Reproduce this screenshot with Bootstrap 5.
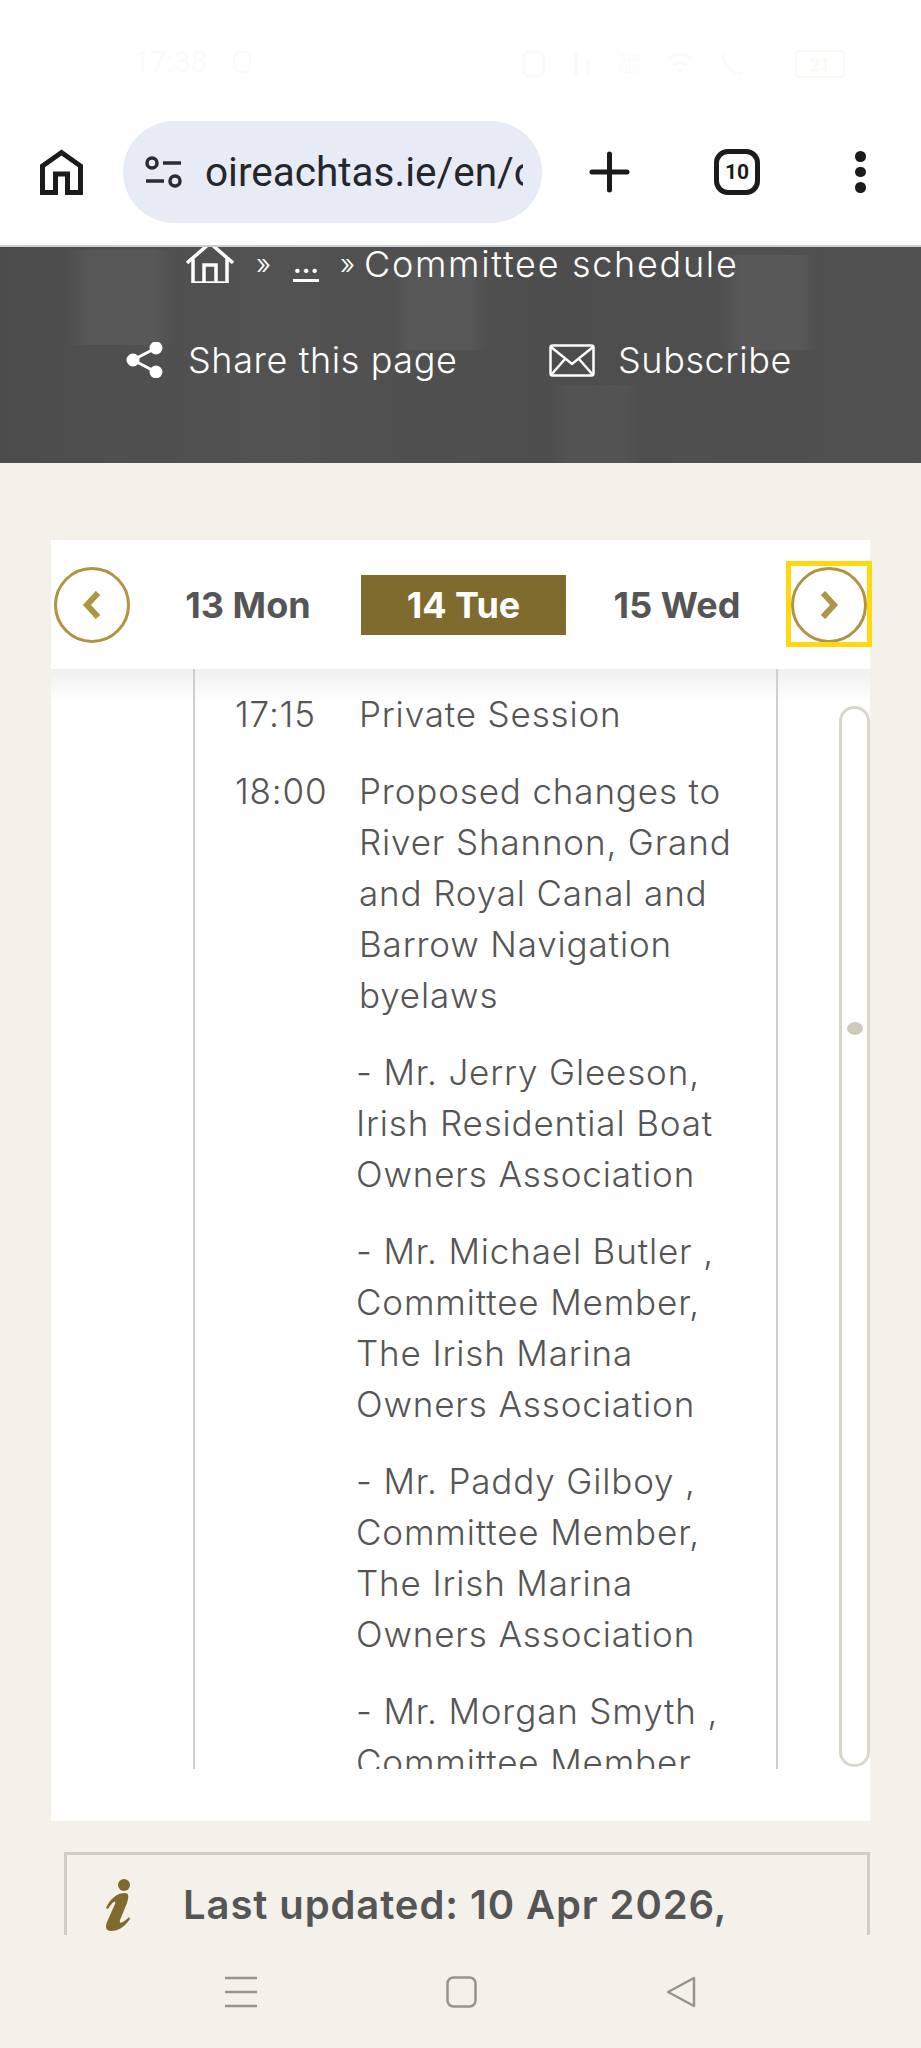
<!DOCTYPE html>
<html lang="en">
<head>
    <meta charset="utf-8">
    <title>Committee schedule</title>
    <link rel="stylesheet" href="https://cdn.jsdelivr.net/npm/bootstrap@5.3.0/dist/css/bootstrap.min.css">
    <style>
        html, body { height: 2048px; overflow: hidden; }
        body { background-color: #f4f1ea; font-family: Inter, "Open Sans", sans-serif; color: #555; }

        .status-strip { height: 121px; padding: 50px 76px 0 133px; color: #fafafa; font-family: Roboto, sans-serif; }
        .status-time { font-size: 30px; line-height: 24px; }
        .status-net { font-size: 10px; line-height: 11px; text-align: center; }

        .browser-bar { height: 126px; padding-bottom: 22px; border-bottom: 2px solid #c9d0d6; background: #fff; }
        .home-slot { width: 123px; padding-left: 40px; }
        .url-pill { width: 419px; height: 102px; border-radius: 51px; background: #e7ebf5; padding-left: 22px; }
        .url-text { width: 318px; margin-left: 22px; font-family: Roboto, sans-serif; font-size: 40.500px; color: #24262b; white-space: nowrap; overflow: hidden; }
        .bar-actions { padding-left: 47px; }
        .tab-count { width: 46px; height: 46px; margin-left: 84px; border: 5px solid #1b1b1d; border-radius: 14px; font: 700 21px/36px Roboto, sans-serif; text-align: center; color: #1b1b1d; }
        .dot-stack { margin-left: 95px; gap: 5px; }
        .dot-stack span { width: 10.500px; height: 10.500px; border-radius: 50%; background: #1b1b1d; }

        .hero-band {
            height: 216px; color: #fff; overflow: hidden;
            background-color: #4f4f4f;
            background-image:
                linear-gradient(90deg, transparent, rgba(255,255,255,.05) 18%, rgba(255,255,255,.05) 82%, transparent),
                linear-gradient(90deg, transparent, rgba(255,255,255,.05) 18%, rgba(255,255,255,.05) 82%, transparent),
                linear-gradient(90deg, transparent, rgba(255,255,255,.05) 18%, rgba(255,255,255,.05) 82%, transparent),
                linear-gradient(90deg, transparent, rgba(255,255,255,.03) 20%, rgba(255,255,255,.03) 80%, transparent),
                linear-gradient(90deg, #4c4c4c, #525252 30%, #4d4d4d 60%, #515151);
            background-size: 105px 95px, 95px 90px, 95px 95px, 95px 80px, 100% 100%;
            background-position: 68px 3px, 393px 13px, 722px 8px, 548px 138px, 0 0;
            background-repeat: no-repeat;
        }
        .crumb-row { height: 36px; padding-left: 186px; font-size: 36px; font-weight: 300; line-height: 34px; }
        .crumb-sep { font-size: 28px; margin: 0 22px 0 22px; }
        .crumb-more { color: #fff; font-weight: 700; font-size: 26px; line-height: 30px; border-bottom: 3px solid #fff; margin-top: 2px; }
        .crumb-after { margin: 0 9px 0 21px; }
        .crumb-title { letter-spacing: 1.700px; }
        .share-row { margin-top: 55px; padding-left: 126px; font-size: 36px; font-weight: 300; letter-spacing: .6px; line-height: 44px; }
        .share-label { margin-left: 25px; width: 361px; }
        .sub-label { margin-left: 23px; }

        .page-main { height: 1472px; padding: 77px 51px 0; overflow: hidden; }
        .sched-card { background: #fff; padding-bottom: 52px; width: 819px; }
        .date-bar { height: 129px; padding: 0 3px; position: relative; }
        .round-btn { width: 76px; height: 76px; border: 3px solid #ae9443; border-radius: 50%; }
        .date-item { font-size: 36px; font-weight: 700; color: #555; text-align: center; white-space: nowrap; }
        .day-one { width: 126px; margin-left: 55px; }
        .date-active { width: 205px; height: 60px; margin-left: 50px; background: #7f6b2e; color: #fff; }
        .day-three { width: 128px; margin-left: 47px; }
        .focus-box { position: absolute; left: 735px; top: 21px; width: 86px; height: 86px; border: 5px solid #ffd90f; }

        .sched-body { height: 1100px; background: linear-gradient(#f0f0f0, #fff 34px); }
        .sched-frame { width: 585px; margin-left: 142px; border-left: 2px solid #cfcfcf; border-right: 2px solid #cfcfcf; overflow: hidden; padding-top: 20px; font-size: 35px; font-weight: 300; letter-spacing: .85px; line-height: 51px; color: #555; }
        .sched-time { width: 164px; padding-left: 40px; flex: none; }
        .sched-text { width: 400px; }
        .sched-row { margin-bottom: 26px; }
        .sched-note { margin: 0 0 26px 161px; width: 410px; }
        .scroll-track { width: 31px; height: 1061px; margin: 37px 0 0 61px; border: 3px solid #d9d6cc; border-radius: 15px; padding-top: 313px; }
        .scroll-dot { width: 16px; height: 13px; border-radius: 50%; background: #d0cabb; margin: 0 auto; }

        .updated-box { margin: 31px 0 0 13px; width: 806px; height: 120px; border: 3px solid #cfcdc6; padding: 24px 0 0 38px; }
        .updated-i { width: 78px; flex: none; }
        .updated-text { font-size: 40px; font-weight: 600; letter-spacing: .9px; line-height: 52px; color: #555; white-space: nowrap; }

        .nav-strip { height: 113px; background: #f4f1ea; padding: 41px 225px 0; }
    </style>
</head>
<body>
    <div class="status-strip d-flex align-items-start bg-white">
        <div class="status-time">17:38</div>
        <svg class="ms-4" width="20" height="24" fill="none" stroke="#fafafa" stroke-width="2"><rect x="2" y="2" width="16" height="20" rx="7"/></svg>
        <div class="ms-auto d-flex align-items-center gap-4">
            <svg width="24" height="28" fill="none" stroke="#fafafa" stroke-width="3"><rect x="2" y="2" width="20" height="24" rx="5"/></svg>
            <svg width="24" height="28" fill="none" stroke="#fafafa" stroke-width="3"><path d="M6 2v24M18 8v18"/></svg>
            <div class="status-net">0.00<br>KB/S</div>
            <svg width="30" height="26" fill="none" stroke="#fafafa" stroke-width="3"><path d="M2 8q13-10 26 0M8 14q7-6 14 0M13 20q2-2 4 0"/></svg>
            <svg width="28" height="26" fill="none" stroke="#fafafa" stroke-width="3"><path d="M4 3q0 18 20 20"/></svg>
            <svg class="ms-4" width="50" height="28" fill="none" stroke="#fbf9f4" stroke-width="2"><rect x="1" y="1" width="48" height="26" rx="3"/><text x="25" y="21" font-size="18" text-anchor="middle" fill="#faf8f0" stroke="none">21</text></svg>
        </div>
    </div>

    <div class="browser-bar d-flex align-items-center">
        <div class="home-slot">
            <svg class="d-block" width="43" height="46" viewBox="0 0 43 46" fill="none" stroke="#1b1b1d" stroke-width="5"><path d="M2.500 43.500V17L21.500 3.500 40.500 17v26.500H27.500V25H15.500v18.500z"/></svg>
        </div>
        <div class="url-pill d-flex align-items-center">
            <svg width="38" height="32" viewBox="0 0 38 32" fill="none" stroke="#2a2c31" stroke-width="3.500"><circle cx="7" cy="7" r="5"/><path d="M18 7h18M1 25h18"/><circle cx="30" cy="25" r="5"/></svg>
            <div class="url-text">oireachtas.ie/en/oireachtas</div>
        </div>
        <div class="bar-actions d-flex align-items-center flex-grow-1">
            <svg width="41" height="42" viewBox="0 0 41 42" stroke="#1b1b1d" stroke-width="5" stroke-linecap="round"><path d="M20.500 3v36M3 21h35"/></svg>
            <div class="tab-count">10</div>
            <div class="dot-stack d-flex flex-column"><span></span><span></span><span></span></div>
        </div>
    </div>

    <div class="hero-band">
        <div class="crumb-row d-flex align-items-start">
            <svg width="48" height="36" viewBox="0 2 48 36" fill="none" stroke="#fff" stroke-width="3.500"><path d="M1 18L24-2 47 18M7 14v24h34V14M18 38V20h12v18"/></svg>
            <span class="crumb-sep">»</span>
            <a class="crumb-more text-decoration-none" href="#">...</a>
            <span class="crumb-sep crumb-after">»</span>
            <span class="crumb-title">Committee schedule</span>
        </div>
        <div class="share-row d-flex align-items-center">
            <svg width="37" height="36" viewBox="0 0 37 36" fill="#fff" stroke="#fff" stroke-width="3"><path d="M30 6L7 18l23 12" fill="none"/><circle cx="30" cy="6" r="5"/><circle cx="7" cy="18" r="5"/><circle cx="30" cy="30" r="5"/></svg>
            <span class="share-label">Share this page</span>
            <svg width="46" height="33" viewBox="0 0 46 33" fill="none" stroke="#fff" stroke-width="2.500"><rect x="1.500" y="1.500" width="43" height="30" rx="2"/><path d="M2 3l21 17L44 3M2 31l14-16M44 31L30 15"/></svg>
            <span class="sub-label">Subscribe</span>
        </div>
    </div>

    <div class="page-main">
        <div class="sched-card">
            <div class="date-bar d-flex align-items-center">
                <div class="round-btn d-flex align-items-center justify-content-center flex-shrink-0">
                    <svg width="20" height="28" viewBox="0 0 20 28" fill="none" stroke="#ae9443" stroke-width="6"><path d="M16 2L5 14l11 12"/></svg>
                </div>
                <div class="date-item day-one">13 Mon</div>
                <div class="date-item date-active d-flex align-items-center justify-content-center">14 Tue</div>
                <div class="date-item day-three">15 Wed</div>
                <div class="round-btn d-flex align-items-center justify-content-center flex-shrink-0 ms-auto">
                    <svg width="20" height="28" viewBox="0 0 20 28" fill="none" stroke="#ae9443" stroke-width="6"><path d="M4 2l11 12L4 26"/></svg>
                </div>
                <div class="focus-box"></div>
            </div>
            <div class="sched-body d-flex">
                <div class="sched-frame">
                    <div class="sched-row d-flex"><div class="sched-time">17:15</div><div class="sched-text">Private Session</div></div>
                    <div class="sched-row d-flex"><div class="sched-time">18:00</div><div class="sched-text">Proposed changes to River Shannon, Grand and Royal Canal and Barrow Navigation byelaws</div></div>
                    <p class="sched-note">- Mr. Jerry Gleeson,<br>Irish Residential Boat<br>Owners Association</p>
                    <p class="sched-note">- Mr. Michael Butler ,<br>Committee Member,<br>The Irish Marina<br>Owners Association</p>
                    <p class="sched-note">- Mr. Paddy Gilboy ,<br>Committee Member,<br>The Irish Marina<br>Owners Association</p>
                    <p class="sched-note">- Mr. Morgan Smyth ,<br>Committee Member,<br>The Irish Marina<br>Owners Association</p>
                </div>
                <div class="scroll-track flex-shrink-0"><div class="scroll-dot"></div></div>
            </div>
        </div>
        <div class="updated-box d-flex align-items-start">
            <div class="updated-i">
                <svg class="d-block" width="26" height="52" viewBox="0 0 26 52" fill="#7f6b2e"><circle cx="19" cy="6" r="6"/><path d="M1 29C5 20 12 14 20 14c4 0 4 4 2 10l-7 17c-1 4 2 4 9-3l1 2c-6 9-13 12-19 12-5 0-6-4-4-9l8-18c1-3-1-4-7 5z"/></svg>
            </div>
            <div class="updated-text">Last updated: 10 Apr 2026,</div>
        </div>
    </div>

    <div class="nav-strip d-flex justify-content-between align-items-start">
        <svg width="32" height="32" viewBox="0 0 32 32" stroke="#96948e" stroke-width="2.500"><path d="M0 2h32M0 16h32M0 30h32"/></svg>
        <svg width="31" height="32" viewBox="0 0 31 32" fill="none" stroke="#96948e" stroke-width="2.500"><rect x="1.500" y="1.500" width="28" height="29" rx="6"/></svg>
        <svg width="30" height="32" viewBox="0 0 30 32" fill="none" stroke="#96948e" stroke-width="2.500" stroke-linejoin="round"><path d="M28 2v28L2 16z"/></svg>
    </div>
    <script src="https://cdn.jsdelivr.net/npm/bootstrap@5.3.0/dist/js/bootstrap.bundle.min.js"></script>
</body>
</html>
